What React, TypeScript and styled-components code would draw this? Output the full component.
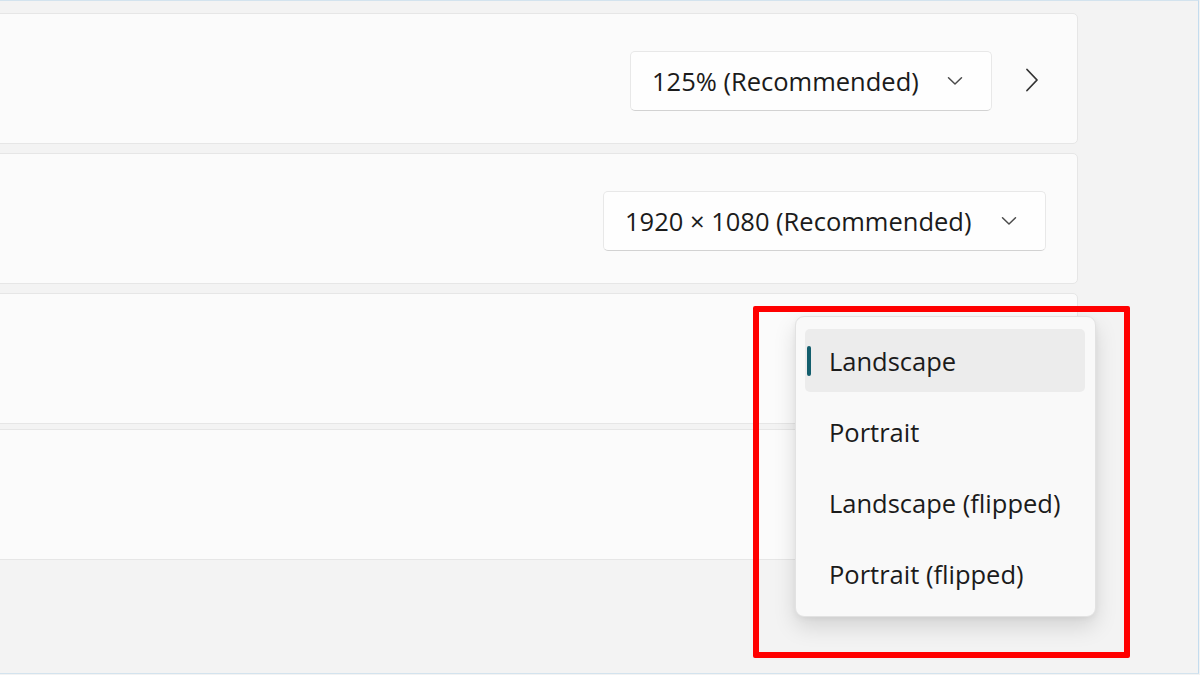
import React from 'react'
import styled, { createGlobalStyle } from 'styled-components'

const GlobalStyle = createGlobalStyle`
  html, body {
    margin: 0;
    padding: 0;
    background: #f3f3f3;
  }
  body {
    font-family: "Segoe UI", "Open Sans", "Noto Sans", sans-serif;
    color: #1b1b1b;
  }
`

const Frame = styled.div`
  position: relative;
  box-sizing: border-box;
  width: 1199px;
  height: 674px;
  border-top: 1px solid #d3e3ee;
  border-right: 1px solid #c3dcef;
  border-bottom: 1px solid #d3e3ee;
  background: #f3f3f3;
  overflow: hidden;
`

const Column = styled.div`
  display: flex;
  flex-direction: column;
  gap: 9px;
  width: 1100px;
  margin-left: -22px;
  padding-top: 12px;
`

const Card = styled.div<{ $pr?: number; $flatTop?: boolean; $flatBottom?: boolean }>`
  box-sizing: border-box;
  height: 131px;
  display: flex;
  align-items: center;
  justify-content: flex-end;
  padding-right: ${(p) => p.$pr ?? 32}px;
  background: #fbfbfb;
  border: 1px solid #e6e6e6;
  border-radius: ${(p) => (p.$flatTop ? '0 0' : '5px 5px')} ${(p) => (p.$flatBottom ? '0 0' : '5px 5px')};
`

const Group = styled.div`
  display: flex;
  flex-direction: column;
  gap: 5px;
`

const Select = styled.div<{ $w: number }>`
  box-sizing: border-box;
  width: ${(p) => p.$w}px;
  height: 60px;
  margin-top: 4px;
  display: flex;
  align-items: center;
  justify-content: space-between;
  padding: 0 28px 0 21px;
  background: #fefefe;
  border: 1px solid #e8e8e8;
  border-bottom-color: #d2d2d2;
  border-radius: 5px;
  font-size: 25.5px;
  white-space: nowrap;
`

const NavArrow = styled.div`
  display: flex;
  align-items: center;
  margin-left: 33px;
  margin-top: 2px;
`

const Annotation = styled.div`
  position: absolute;
  left: 753px;
  top: 305px;
  width: 377px;
  height: 352px;
  box-sizing: border-box;
  border: 6px solid #ff0000;
  border-radius: 2px;
  z-index: 2;
`

const Menu = styled.div`
  position: absolute;
  left: 795px;
  top: 315px;
  width: 301px;
  box-sizing: border-box;
  padding: 8px 10px 3px 9px;
  background: #f9f9f9;
  border: 1px solid #e2e2e2;
  border-radius: 9px;
  box-shadow: 0 10px 22px rgba(0, 0, 0, 0.13), 0 2px 6px rgba(0, 0, 0, 0.05);
  z-index: 1;
`

const MenuItem = styled.div<{ $selected?: boolean }>`
  position: relative;
  height: 63px;
  margin: 4px 0 8px;
  display: flex;
  align-items: center;
  padding-left: 24px;
  border-radius: 5px;
  background: ${(p) => (p.$selected ? '#ececec' : 'transparent')};
  font-size: 25.5px;
  white-space: nowrap;
`

const Indicator = styled.span`
  position: absolute;
  left: 2px;
  top: 17px;
  width: 4px;
  height: 30px;
  border-radius: 2px;
  background: #135e6d;
`

const ChevronDown = () => (
  <svg width="16" height="10" viewBox="0 0 16 10" fill="none">
    <path d="M1.5 1.8 L8 8 L14.5 1.8" stroke="#4a4a4a" strokeWidth="1.5" strokeLinecap="round" strokeLinejoin="round" />
  </svg>
)

const ChevronRight = () => (
  <svg width="14" height="24" viewBox="0 0 14 24" fill="none">
    <path d="M2 1.5 L12 12 L2 22.5" stroke="#333" strokeWidth="1.8" strokeLinecap="round" strokeLinejoin="round" />
  </svg>
)

const options = ['Landscape', 'Portrait', 'Landscape (flipped)', 'Portrait (flipped)']

export default function App() {
  return (
    <>
      <GlobalStyle />
      <Frame>
        <Column>
          <Card $pr={38}>
            <Select $w={362}>
              <span>125% (Recommended)</span>
              <ChevronDown />
            </Select>
            <NavArrow>
              <ChevronRight />
            </NavArrow>
          </Card>
          <Card $pr={31}>
            <Select $w={443}>
              <span>1920 × 1080 (Recommended)</span>
              <ChevronDown />
            </Select>
          </Card>
          <Group>
            <Card $flatBottom />
            <Card $flatTop />
          </Group>
        </Column>
        <Menu>
          {options.map((o, i) => (
            <MenuItem key={o} $selected={i === 0}>
              {i === 0 && <Indicator />}
              {o}
            </MenuItem>
          ))}
        </Menu>
        <Annotation />
      </Frame>
    </>
  )
}
